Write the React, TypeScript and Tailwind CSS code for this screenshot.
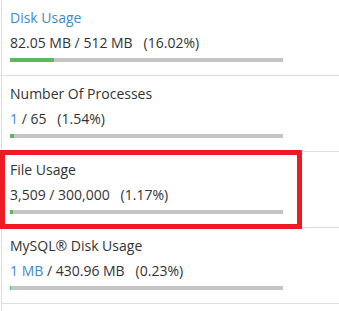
import type { ReactNode } from "react";

interface StatRowProps {
  title: ReactNode;
  value: ReactNode;
  barWidth: number;
}

function StatRow({ title, value, barWidth }: StatRowProps) {
  return (
    <div className="border-b border-[#dddddd] pl-2 pt-2 pb-[13px]">
      <div className="text-[14px] leading-5">{title}</div>
      <div className="mt-[5px] text-[14px] leading-5 whitespace-pre">{value}</div>
      {/* 使用率バー */}
      <div className="mt-[5px] h-1 w-[273px] bg-[#c4c4c4]">
        <div className="h-1 bg-[#5cb85c]" style={{ width: `${barWidth}px` }} />
      </div>
    </div>
  );
}

export default function App() {
  return (
    <div
      className="relative h-[311px] w-[339px] overflow-hidden bg-white text-[#333333]"
      style={{ fontFamily: '"Open Sans", "Liberation Sans", sans-serif' }}
    >
      <div className="ml-px -mt-px border-l border-[#dddddd]">
        <div className="border-t border-[#dddddd]">
          <StatRow
            title={<span className="text-[#428bca]">Disk Usage</span>}
            value={"82.05 MB / 512 MB   (16.02%)"}
            barWidth={44}
          />
          <StatRow
            title="Number Of Processes"
            value={
              <>
                <span className="text-[#428bca]">1</span>
                {" / 65   (1.54%)"}
              </>
            }
            barWidth={4}
          />
          <StatRow title="File Usage" value={"3,509 / 300,000   (1.17%)"} barWidth={3} />
          <StatRow
            title="MySQL® Disk Usage"
            value={
              <>
                <span className="text-[#428bca]">1 MB</span>
                {" / 430.96 MB   (0.23%)"}
              </>
            }
            barWidth={1}
          />
          <div className="h-10" />
        </div>
      </div>

      {/* ハイライト枠 */}
      <div className="pointer-events-none absolute left-0 top-[150px] h-[79px] w-[302px] border-[5px] border-[#ed1c24]" />
    </div>
  );
}
